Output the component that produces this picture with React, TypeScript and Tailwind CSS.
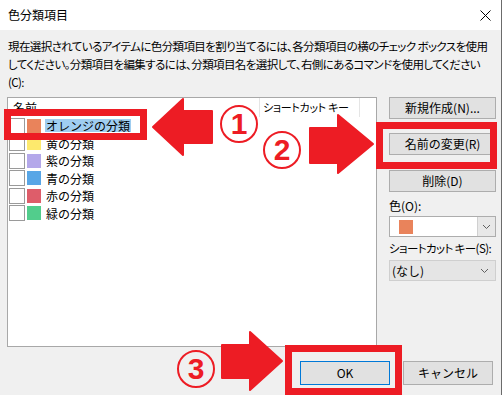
import React from 'react'

const RED = '#ed1c24'

const rows = [
  { label: 'オレンジの分類', color: '#e9835b', selected: true },
  { label: '黄の分類', color: '#fde96d' },
  { label: '紫の分類', color: '#b4a8ea' },
  { label: '青の分類', color: '#58a6e6' },
  { label: '赤の分類', color: '#de5d6a' },
  { label: '緑の分類', color: '#52cd8c' },
]

function Chevron() {
  return (
    <svg width="9" height="6" viewBox="0 0 9 6" fill="none">
      <path d="M1 1l3.5 3.5L8 1" stroke="#606060" strokeWidth="1" />
    </svg>
  )
}

function WinButton({ children, className = '' }: { children: React.ReactNode; className?: string }) {
  return (
    <div
      className={`flex items-center justify-center border border-[#adadad] bg-[#e1e1e1] ${className}`}
    >
      {children}
    </div>
  )
}

function NumCircle({ n, className }: { n: string; className: string }) {
  return (
    <div
      className={`absolute flex h-[38px] w-[38px] items-center justify-center rounded-full border-2 border-[#ed1c24] font-['Liberation_Sans',sans-serif] text-[30px] leading-none font-bold text-[#ed1c24] ${className}`}
    >
      {n}
    </div>
  )
}

export default function App() {
  return (
    <div className="relative h-[395px] w-[502px] overflow-hidden border-r border-[#6b6b6b] bg-[#f0f0f0] font-['Noto_Sans_CJK_JP','Noto_Sans',sans-serif] text-[12px] text-black">
      {/* title bar */}
      <div className="flex h-[30px] items-center justify-between bg-white pr-[10px] pl-2">
        <span className="text-[12px]">色分類項目</span>
        <svg width="11" height="11" viewBox="0 0 11 11">
          <path d="M0.5 0.5l10 10M10.5 0.5l-10 10" stroke="#000" strokeWidth="1" />
        </svg>
      </div>

      {/* description */}
      <div className="px-2 pt-[7px] text-[11.5px] leading-[18px] tracking-[-0.6px] whitespace-nowrap [font-feature-settings:'palt']">
        <div>現在選択されているアイテムに色分類項目を割り当てるには、各分類項目の横のチェック ボックスを使用</div>
        <div>してください。分類項目を編集するには、分類項目名を選択して、右側にあるコマンドを使用してください</div>
        <div>(C):</div>
      </div>

      {/* content */}
      <div className="mt-[6px] flex pl-[7px]">
        <div className="h-[250px] w-[370px] border border-[#a8a8a8] bg-white">
          <div className="flex h-[19px] items-center">
            <div className="w-[251px] pl-[5px]">名前</div>
            <div className="h-full w-[100px] border-l border-[#e5e5e5] pt-[1px] pl-[3px] text-[11px] tracking-[-0.3px] whitespace-nowrap [font-feature-settings:'palt']">
              ショートカット キー
            </div>
            <div className="h-full border-l border-[#e5e5e5]" />
          </div>
          {rows.map((r) => (
            <div key={r.label} className="flex h-[17.5px] items-center pl-[1px]">
              <div className="h-[16px] w-[16px] border border-[#9a9a9a] bg-white" />
              <div className="ml-[2px] h-[14px] w-[14px]" style={{ backgroundColor: r.color }} />
              <div
                className={`ml-[4px] px-[1px] leading-[13px] ${r.selected ? 'bg-[#9fcdf0]' : ''}`}
              >
                {r.label}
              </div>
            </div>
          ))}
        </div>

        <div className="ml-[12px] flex w-[107px] flex-col">
          <WinButton className="h-[22px]">新規作成(N)...</WinButton>
          <WinButton className="mt-[14px] h-[22px]">名前の変更(R)</WinButton>
          <WinButton className="mt-[15px] h-[22px]">削除(D)</WinButton>
          <div className="mt-[6px] leading-[16px]">色(O):</div>
          <div className="mt-[2px] flex h-[21px] border border-[#adadad] bg-white">
            <div className="flex flex-1 items-center pl-[9px]">
              <div className="h-[14px] w-[14px] bg-[#e9835b]" />
            </div>
            <div className="flex w-[18px] items-center justify-center border-l border-[#d0d0d0] bg-[#e8e8e8]">
              <Chevron />
            </div>
          </div>
          <div className="mt-[3px] text-[11.5px] leading-[16px] tracking-[-0.6px] whitespace-nowrap [font-feature-settings:'palt']">
            ショートカット キー(S):
          </div>
          <div className="mt-[4px] flex h-[21px] items-center justify-between border border-[#cfcfcf] bg-[#e5e5e5] pr-[6px] pl-[2px]">
            <span>(なし)</span>
            <Chevron />
          </div>
        </div>
      </div>

      {/* bottom buttons */}
      <div className="mt-[14px] flex justify-end gap-[13px] pr-[8px]">
        <div className="flex h-[24px] w-[90px] items-center justify-center border border-[#0078d7] bg-[#e1e1e1]">
          OK
        </div>
        <WinButton className="h-[24px] w-[90px]">キャンセル</WinButton>
      </div>

      {/* annotations */}
      <div className="absolute top-[109px] left-[4px] h-[31px] w-[143px] border-[7px] border-[#ed1c24]" />
      <div className="absolute top-[122px] left-[376px] h-[47px] w-[121px] border-[7px] border-[#ed1c24]" />
      <div className="absolute top-[345px] left-[285px] h-[50px] w-[117px] border-[7px] border-[#ed1c24]" />

      <svg className="absolute top-[96px] left-[150px]" width="66" height="62" viewBox="0 0 66 62">
        <polygon
          points="3,31 33,3 33,15 62,15 62,47 33,47 33,59"
          fill={RED}
          stroke={RED}
          strokeWidth="2"
          strokeLinejoin="round"
        />
      </svg>
      <svg className="absolute top-[112px] left-[307px]" width="70" height="64" viewBox="0 0 70 64">
        <polygon
          points="3,16 31,16 31,3 66,32 31,61 31,51 3,51"
          fill={RED}
          stroke={RED}
          strokeWidth="2"
          strokeLinejoin="round"
        />
      </svg>
      <svg className="absolute top-[329px] left-[219px]" width="66" height="64" viewBox="0 0 66 64">
        <polygon
          points="3,16 31,16 31,3 63,32 31,61 31,49 3,49"
          fill={RED}
          stroke={RED}
          strokeWidth="2"
          strokeLinejoin="round"
        />
      </svg>

      <NumCircle n="1" className="top-[105px] left-[220px] bg-white" />
      <NumCircle n="2" className="top-[131px] left-[263px] bg-white" />
      <NumCircle n="3" className="top-[350px] left-[177px]" />
    </div>
  )
}
